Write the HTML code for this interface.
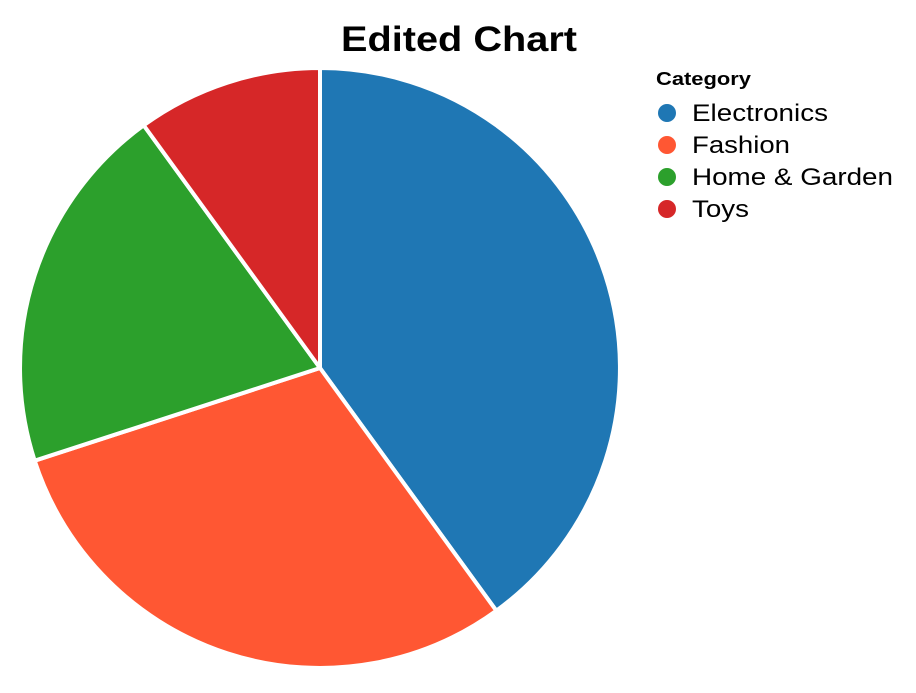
<!DOCTYPE html>
<html><head><meta charset="utf-8"><style>
html,body{margin:0;padding:0;background:#fff;}
body{width:916px;height:688px;overflow:hidden;}
text{font-family:"Liberation Sans",Arial,sans-serif;}
</style></head><body>
<svg width="916" height="688" viewBox="0 0 916 688">
<text x="341" y="51" font-size="35" font-weight="bold" fill="#000" textLength="236" lengthAdjust="spacingAndGlyphs">Edited Chart</text>
<g stroke="#fff" stroke-width="4" stroke-linejoin="round">
<path d="M320,368 L320,68 A300,300 0 0 1 496.3,610.7 Z" fill="#1f77b4"/>
<path d="M320,368 L496.3,610.7 A300,300 0 0 1 34.7,460.7 Z" fill="#ff5733"/>
<path d="M320,368 L34.7,460.7 A300,300 0 0 1 143.7,125.3 Z" fill="#2ca02c"/>
<path d="M320,368 L143.7,125.3 A300,300 0 0 1 320,68 Z" fill="#d62728"/>
</g>
<text x="656" y="85" font-size="18" font-weight="bold" fill="#000" textLength="95" lengthAdjust="spacingAndGlyphs">Category</text>
<circle cx="667" cy="113" r="9" fill="#1f77b4"/>
<circle cx="667" cy="145" r="9" fill="#ff5733"/>
<circle cx="667" cy="177" r="9" fill="#2ca02c"/>
<circle cx="667" cy="209" r="9" fill="#d62728"/>
<g font-size="24" fill="#000">
<text x="692" y="121" textLength="136" lengthAdjust="spacingAndGlyphs">Electronics</text>
<text x="692" y="153" textLength="98" lengthAdjust="spacingAndGlyphs">Fashion</text>
<text x="692" y="185" textLength="201" lengthAdjust="spacingAndGlyphs">Home &amp; Garden</text>
<text x="692" y="217" textLength="57" lengthAdjust="spacingAndGlyphs">Toys</text>
</g>
</svg>
</body></html>
